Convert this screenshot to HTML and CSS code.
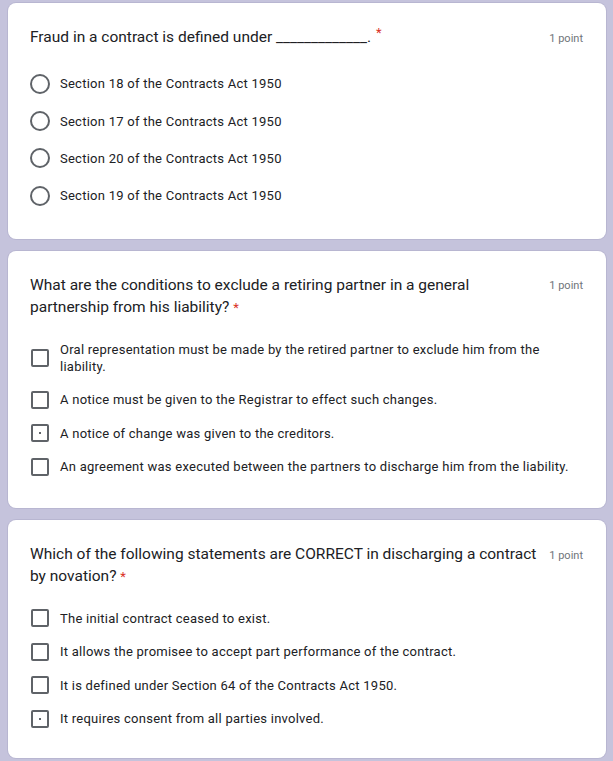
FILE: index.html
```html
<!DOCTYPE html>
<html lang="en">
<head>
    <meta charset="UTF-8">
    <meta name="viewport" content="width=device-width, initial-scale=1.0">
    <title>Quiz</title>
    <link rel="stylesheet" href="styles.css">
</head>
<body>
    <div class="card">
        <div class="head">
            <div class="title">Fraud in a contract is defined under _____________.<span class="req sup">*</span></div>
            <div class="points first">1 point</div>
        </div>
        <div class="options radios">
            <label class="opt"><span class="radio"></span><span class="text">Section 18 of the Contracts Act 1950</span></label>
            <label class="opt"><span class="radio"></span><span class="text">Section 17 of the Contracts Act 1950</span></label>
            <label class="opt"><span class="radio"></span><span class="text">Section 20 of the Contracts Act 1950</span></label>
            <label class="opt"><span class="radio"></span><span class="text">Section 19 of the Contracts Act 1950</span></label>
        </div>
    </div>

    <div class="card">
        <div class="head">
            <div class="title">What are the conditions to exclude a retiring partner in a general partnership from his liability? <span class="req">*</span></div>
            <div class="points">1 point</div>
        </div>
        <div class="options">
            <label class="opt"><span class="check"></span><span class="text">Oral representation must be made by the retired partner to exclude him from the liability.</span></label>
            <label class="opt"><span class="check"></span><span class="text">A notice must be given to the Registrar to effect such changes.</span></label>
            <label class="opt"><span class="check dot"></span><span class="text">A notice of change was given to the creditors.</span></label>
            <label class="opt"><span class="check"></span><span class="text">An agreement was executed between the partners to discharge him from the liability.</span></label>
        </div>
    </div>

    <div class="card last">
        <div class="head">
            <div class="title">Which of the following statements are CORRECT in discharging a contract by novation? <span class="req">*</span></div>
            <div class="points first">1 point</div>
        </div>
        <div class="options">
            <label class="opt"><span class="check"></span><span class="text">The initial contract ceased to exist.</span></label>
            <label class="opt"><span class="check"></span><span class="text">It allows the promisee to accept part performance of the contract.</span></label>
            <label class="opt"><span class="check"></span><span class="text">It is defined under Section 64 of the Contracts Act 1950.</span></label>
            <label class="opt"><span class="check dot"></span><span class="text">It requires consent from all parties involved.</span></label>
        </div>
    </div>
</body>
</html>
```

FILE: styles.css
```css
body{
    margin:0px;
    padding:3px 7px 0px 8px;
    background-color:#c5c3dc;
    font-family:Roboto, "Liberation Sans", sans-serif;
    color:#202124;
}
.card{
    background-color:white;
    border-radius:8px;
    padding:23px 23px 24px 22px;
    margin-bottom:12px;
    box-shadow:0 0 0 1px rgba(160,158,190,0.35);
}
.card.last{
    padding-bottom:22px;
}
.head{
    display:flex;
    justify-content:space-between;
    align-items:flex-start;
}
.title{
    font-size:15.5px;
    line-height:22px;
    width:515px;
}
.req{
    color:#d93025;
    font-size:13px;
}
.sup{
    position:relative;
    top:-5px;
    margin-left:5px;
}
.points{
    font-size:11px;
    color:#70757a;
    line-height:22px;
    margin-top:1px;
}
.points.first{
    margin-top:2px;
}
.options{
    margin-top:15px;
    display:flex;
    flex-direction:column;
}
.last .options{
    margin-top:14px;
}
.radios{
    margin-top:15px;
}
.opt{
    display:flex;
    align-items:center;
    gap:10px;
    padding:7.75px 0px;
    font-size:13px;
    line-height:17px;
    letter-spacing:0.25px;
}
.radios .opt{
    padding:0px;
    height:37.4px;
}
.text{
    max-width:523px;
}
.radio{
    flex:none;
    width:16px;
    height:16px;
    border:2px solid #5f6368;
    border-radius:50%;
}
.check{
    flex:none;
    width:14px;
    height:14px;
    border:2px solid #5f6368;
    border-radius:2px;
    margin-left:1px;
    margin-right:1px;
    position:relative;
}
.dot::after{
    content:"";
    position:absolute;
    left:6px;
    top:6px;
    width:2px;
    height:2px;
    background-color:#5f6368;
}
```
